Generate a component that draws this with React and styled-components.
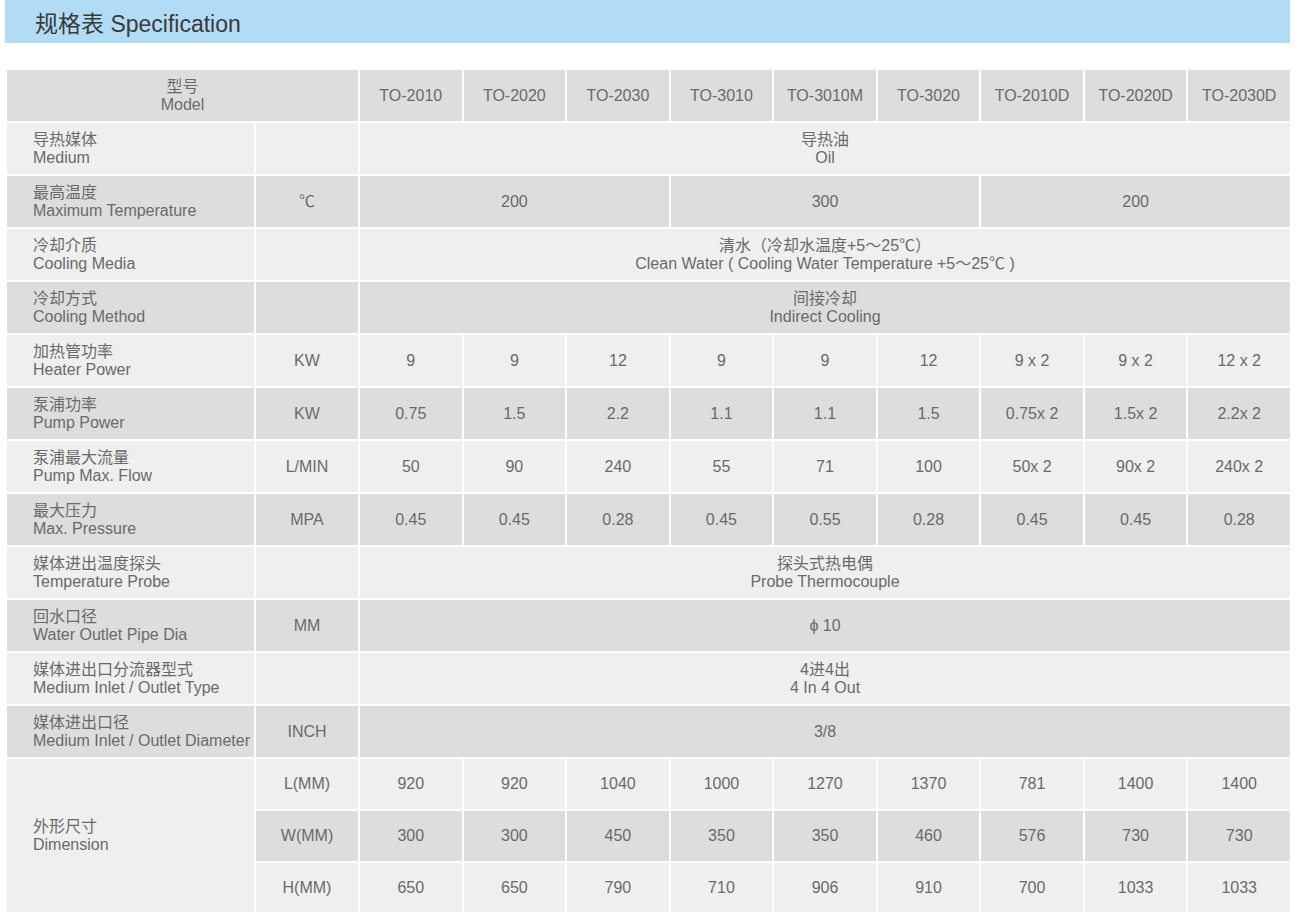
import React from 'react';
import styled, { createGlobalStyle } from 'styled-components';

const GlobalStyle = createGlobalStyle`
  body {
    margin: 0;
    background: #fff;
    font-family: "Liberation Sans", Arial, "Noto Sans CJK SC", sans-serif;
  }
`;

const Page = styled.div`
  width: 1300px;
  height: 912px;
  overflow: hidden;
`;

const TitleBar = styled.div`
  margin: 0 10px 0 5px;
  height: 43px;
  background: #b2dcf6;
  display: flex;
  align-items: center;
  padding-left: 30px;
  font-size: 23px;
  color: #3a3a3a;
`;

const Table = styled.table`
  margin: 25px 0 0 5px;
  width: 1287px;
  border-collapse: separate;
  border-spacing: 2px;
  table-layout: fixed;
  color: #6a6a6a;
  font-size: 16px;
  line-height: 18px;
`;

const Cell = styled.td`
  height: ${p => p.$h || 51}px;
  background: ${p => (p.$dark ? '#dddddd' : '#efefef')};
  text-align: ${p => (p.$left ? 'left' : 'center')};
  padding: ${p => (p.$left ? '0 0 0 26px' : '0')};
  vertical-align: middle;
  white-space: nowrap;
`;

const Label = ({ zh, en }) => (
  <>
    {zh}
    <br />
    {en}
  </>
);

const models = ['TO-2010', 'TO-2020', 'TO-2030', 'TO-3010', 'TO-3010M', 'TO-3020', 'TO-2010D', 'TO-2020D', 'TO-2030D'];

const rows = [
  { zh: '导热媒体', en: 'Medium', unit: '', span: [[9, <Label zh="导热油" en="Oil" />]] },
  { zh: '最高温度', en: 'Maximum Temperature', unit: '℃', span: [[3, '200'], [3, '300'], [3, '200']] },
  { zh: '冷却介质', en: 'Cooling Media', unit: '', span: [[9, <Label zh="清水（冷却水温度+5～25℃）" en="Clean Water ( Cooling Water Temperature +5～25℃ )" />]] },
  { zh: '冷却方式', en: 'Cooling Method', unit: '', span: [[9, <Label zh="间接冷却" en="Indirect Cooling" />]] },
  { zh: '加热管功率', en: 'Heater Power', unit: 'KW', vals: ['9', '9', '12', '9', '9', '12', '9 x 2', '9 x 2', '12 x 2'] },
  { zh: '泵浦功率', en: 'Pump Power', unit: 'KW', vals: ['0.75', '1.5', '2.2', '1.1', '1.1', '1.5', '0.75x 2', '1.5x 2', '2.2x 2'] },
  { zh: '泵浦最大流量', en: 'Pump Max. Flow', unit: 'L/MIN', vals: ['50', '90', '240', '55', '71', '100', '50x 2', '90x 2', '240x 2'] },
  { zh: '最大压力', en: 'Max. Pressure', unit: 'MPA', vals: ['0.45', '0.45', '0.28', '0.45', '0.55', '0.28', '0.45', '0.45', '0.28'] },
  { zh: '媒体进出温度探头', en: 'Temperature Probe', unit: '', span: [[9, <Label zh="探头式热电偶" en="Probe Thermocouple" />]] },
  { zh: '回水口径', en: 'Water Outlet Pipe Dia', unit: 'MM', span: [[9, 'ϕ 10']] },
  { zh: '媒体进出口分流器型式', en: 'Medium Inlet / Outlet Type', unit: '', span: [[9, <Label zh="4进4出" en="4 In 4 Out" />]] },
  { zh: '媒体进出口径', en: 'Medium Inlet / Outlet Diameter', unit: 'INCH', span: [[9, '3/8']] },
];

const dims = [
  { unit: 'L(MM)', vals: ['920', '920', '1040', '1000', '1270', '1370', '781', '1400', '1400'] },
  { unit: 'W(MM)', vals: ['300', '300', '450', '350', '350', '460', '576', '730', '730'] },
  { unit: 'H(MM)', vals: ['650', '650', '790', '710', '906', '910', '700', '1033', '1033'] },
];

export default function App() {
  return (
    <Page>
      <GlobalStyle />
      <TitleBar>规格表 Specification</TitleBar>
      <Table>
        <colgroup>
          <col style={{ width: 247 }} />
          <col style={{ width: 102 }} />
          {models.map(m => <col key={m} />)}
        </colgroup>
        <tbody>
          <tr>
            <Cell $dark colSpan={2}><Label zh="型号" en="Model" /></Cell>
            {models.map(m => <Cell $dark key={m}>{m}</Cell>)}
          </tr>
          {rows.map((r, i) => {
            const dark = i % 2 === 1;
            return (
              <tr key={r.en}>
                <Cell $dark={dark} $left><Label zh={r.zh} en={r.en} /></Cell>
                <Cell $dark={dark}>{r.unit}</Cell>
                {r.span
                  ? r.span.map(([n, v], j) => <Cell $dark={dark} colSpan={n} key={j}>{v}</Cell>)
                  : r.vals.map((v, j) => <Cell $dark={dark} key={j}>{v}</Cell>)}
              </tr>
            );
          })}
          {dims.map((d, i) => (
            <tr key={d.unit}>
              {i === 0 && (
                <Cell $left rowSpan={3}><Label zh="外形尺寸" en="Dimension" /></Cell>
              )}
              <Cell $dark={i === 1} $h={50}>{d.unit}</Cell>
              {d.vals.map((v, j) => <Cell $dark={i === 1} $h={50} key={j}>{v}</Cell>)}
            </tr>
          ))}
        </tbody>
      </Table>
    </Page>
  );
}
